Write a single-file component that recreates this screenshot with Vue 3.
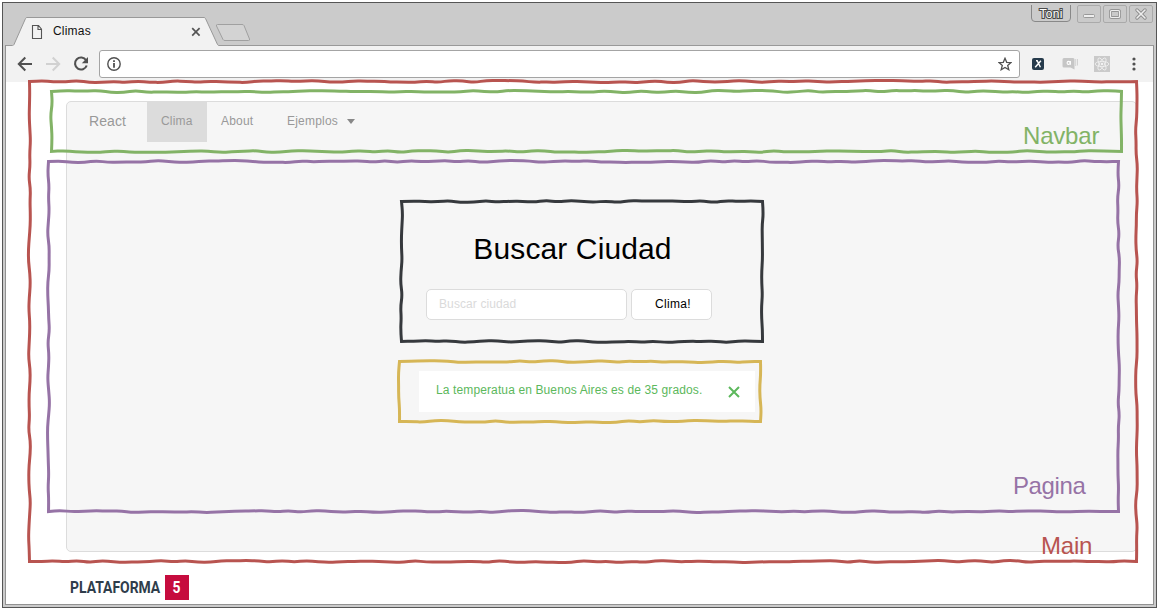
<script setup>
// Hand-sketched rectangles laid over the page to mark each component
const frames = [
  { name: 'Main', color: '#b85450', x: 29.5, y: 81.5, w: 1107, h: 480, seed: 1 },
  { name: 'Navbar', color: '#82b366', x: 51.5, y: 91.5, w: 1070, h: 60, seed: 2 },
  { name: 'Pagina', color: '#9673a6', x: 48.5, y: 161.5, w: 1070, h: 350, seed: 3 },
  { name: 'Buscador', color: '#36393d', x: 401.5, y: 201.5, w: 361, h: 140, seed: 4 },
  { name: 'Alerta', color: '#d6b656', x: 399.5, y: 361.5, w: 361, h: 60, seed: 5 },
]

function sketch(f) {
  let s = f.seed * 7919
  const rnd = () => {
    s = (s * 16807) % 2147483647
    return s / 2147483647 - 0.5
  }
  const side = (x1, y1, x2, y2) => {
    const len = Math.hypot(x2 - x1, y2 - y1)
    const n = Math.max(2, Math.round(len / 12))
    const pts = []
    for (let i = 0; i <= n; i++) {
      const t = i / n
      const d = i === 0 || i === n ? 0 : rnd() * 2.2
      pts.push([x1 + (x2 - x1) * t + (y1 === y2 ? 0 : d), y1 + (y2 - y1) * t + (y1 === y2 ? d : 0)])
    }
    let out = ''
    for (let i = 1; i < pts.length - 1; i++) {
      const mx = (pts[i][0] + pts[i + 1][0]) / 2
      const my = (pts[i][1] + pts[i + 1][1]) / 2
      out += `Q${pts[i][0].toFixed(2)} ${pts[i][1].toFixed(2)} ${mx.toFixed(2)} ${my.toFixed(2)}`
    }
    return out + `L${x2} ${y2}`
  }
  const r = f.x + f.w
  const b = f.y + f.h
  return `M${f.x} ${f.y}` + side(f.x, f.y, r, f.y) + side(r, f.y, r, b) + side(r, b, f.x, b) + side(f.x, b, f.x, f.y) + 'Z'
}
</script>

<template>
  <div class="screen">
    <div class="window">
      <header class="titlebar">
        <svg class="tabshape" width="1148" height="43" viewBox="6 3 1148 43">
          <path d="M6 46V45.500H12.500Q13.500 45.500 14 44.500L25.500 18.500Q26 17.500 27 17.500H204Q205 17.500 205.500 18.500L217.500 44.500Q218 45.500 219 45.500H1154V46Z" fill="#f2f2f2" />
          <path d="M6 45.500H12.500Q13.500 45.500 14 44.500L25.500 18.500Q26 17.500 27 17.500H204Q205 17.500 205.500 18.500L217.500 44.500Q218 45.500 219 45.500H1154" fill="none" stroke="#999" />
          <path d="M217.500 24.500H242Q243.500 24.500 244 25.500L249.500 39Q250 40.500 248.500 40.500H225Q223.500 40.500 223 39.500L216.500 26Q216 24.500 217.500 24.500Z" fill="#d3d3d3" stroke="#a0a0a0" />
        </svg>
        <div class="tab">
          <svg width="12" height="14" viewBox="0 0 12 14"><path d="M1.500 .5H7.500L10.500 4.200V13.500H1.500ZM7 .5V4.500H10.500" fill="none" stroke="#555" stroke-width="1.100" /></svg>
          <span>Climas</span>
          <svg class="tabclose" width="10" height="10" viewBox="0 0 10 10"><path d="M1.200 1.200L8.600 8.600M8.600 1.200L1.200 8.600" stroke="#555" stroke-width="1.700" /></svg>
        </div>
        <div class="controls">
          <svg class="user" width="40" height="18" viewBox="0 0 40 18">
            <path d="M.5 0V13Q.5 16.500 4 16.500H36Q39.500 16.500 39.500 13V0" fill="#cbcbcb" stroke="#888" />
            <text x="8.500" y="13" textLength="23" font-size="12" font-family="Liberation Sans, sans-serif" fill="#fff" stroke="#4b4b4b" stroke-width="2.200" paint-order="stroke">Toni</text>
          </svg>
          <svg width="24" height="18" viewBox="0 0 24 18"><rect x=".5" y=".5" width="23" height="17" rx="1.500" fill="#cacaca" stroke="#aaa" /><rect x="6.500" y="9.500" width="11" height="3" rx="1" fill="#eee" stroke="#999" /></svg>
          <svg width="24" height="18" viewBox="0 0 24 18"><rect x=".5" y=".5" width="23" height="17" rx="1.500" fill="#cacaca" stroke="#aaa" /><rect x="7.500" y="5.500" width="9" height="7" rx="1" fill="none" stroke="#959595" stroke-width="3" /><rect x="7.500" y="5.500" width="9" height="7" rx="1" fill="none" stroke="#eee" stroke-width="1.200" /></svg>
          <svg width="24" height="18" viewBox="0 0 24 18"><rect x=".5" y=".5" width="23" height="17" rx="1.500" fill="#cacaca" stroke="#aaa" /><path d="M8 5L16 13M16 5L8 13" stroke="#8d8d8d" stroke-width="3.400" stroke-linecap="round" /><path d="M8 5L16 13M16 5L8 13" stroke="#eee" stroke-width="1.600" stroke-linecap="round" /></svg>
        </div>
      </header>

      <div class="body">
        <div class="toolbar">
          <svg class="nav-icon" width="16" height="16" viewBox="0 0 16 16"><path d="M15 8H2M8.300 1.500L1.800 8L8.300 14.500" fill="none" stroke="#505050" stroke-width="2" /></svg>
          <svg class="nav-icon fwd" width="16" height="16" viewBox="0 0 16 16"><path d="M1 8H14M7.700 1.500L14.200 8L7.700 14.500" fill="none" stroke="#d1d1d1" stroke-width="2" /></svg>
          <svg class="nav-icon reload" width="16" height="16" viewBox="0 0 16 16"><path d="M13.100 4.300A6 6 0 1 0 13.700 9.500" fill="none" stroke="#505050" stroke-width="2.100" /><path d="M15 1V7.200H8.800Z" fill="#505050" /></svg>
          <div class="address">
            <svg width="14" height="14" viewBox="0 0 14 14"><circle cx="7" cy="7" r="6.200" fill="none" stroke="#505050" stroke-width="1.400" /><path d="M6.100 6H7.900V10.800H6.100ZM6.100 3.200H7.900V4.900H6.100Z" fill="#505050" /></svg>
            <svg width="14" height="14" viewBox="0 0 14 14"><path d="M7 1.300L8.700 5.300L13 5.600L9.700 8.400L10.800 12.700L7 10.400L3.200 12.700L4.300 8.400L1 5.600L5.300 5.300Z" fill="none" stroke="#505050" stroke-width="1.300" /></svg>
          </div>
          <svg class="ext-x" width="12" height="12" viewBox="0 0 12 12"><rect width="12" height="12" rx="2" fill="#263b4c" /><path d="M4 2.800H5.200L8.400 9.300M8.900 2.800L3.200 9.300" fill="none" stroke="#fff" stroke-width="1.400" /></svg>
          <svg class="ext-a" width="17" height="13" viewBox="0 0 17 13"><path d="M2 1H11Q12.500 1 12.500 2.500V12.500L8.500 10.500H2Q.5 10.500 .5 9V2.500Q.5 1 2 1Z" fill="#c6c6c6" /><path d="M13.700 2V9M15.500 2V8.500" stroke="#d2d2d2" /><circle cx="6.600" cy="5.900" r="1.500" fill="none" stroke="#fff" stroke-width="1.100" /><path d="M8.400 4V7.800" stroke="#fff" /></svg>
          <svg class="ext-react" width="16" height="16" viewBox="0 0 16 16"><rect width="16" height="16" fill="#cacaca" /><g fill="none" stroke="#f2f2f2" stroke-width=".8"><ellipse cx="8" cy="8" rx="6.800" ry="2.600" /><ellipse cx="8" cy="8" rx="6.800" ry="2.600" transform="rotate(60 8 8)" /><ellipse cx="8" cy="8" rx="6.800" ry="2.600" transform="rotate(120 8 8)" /></g><circle cx="8" cy="8" r="1.300" fill="#f2f2f2" /></svg>
          <svg class="menu" width="4" height="14" viewBox="0 0 4 14"><circle cx="2" cy="2" r="1.600" fill="#505050" /><circle cx="2" cy="7" r="1.600" fill="#505050" /><circle cx="2" cy="12" r="1.600" fill="#505050" /></svg>
        </div>

        <div class="page">
          <main class="panel">
            <nav class="navbar">
              <span class="brand">React</span>
              <span class="link active">Clima</span>
              <span class="link about">About</span>
              <span class="link drop">Ejemplos <i class="caret"></i></span>
            </nav>
            <section class="search">
              <h1>Buscar Ciudad</h1>
              <div class="form">
                <div class="input">Buscar ciudad</div>
                <div class="button">Clima!</div>
              </div>
            </section>
            <div class="alert">
              <span>La temperatua en Buenos Aires es de 35 grados.</span>
              <svg width="12" height="12" viewBox="0 0 12 12"><path d="M1 1L11 11M11 1L1 11" stroke="#5cb85c" stroke-width="2" /></svg>
            </div>
          </main>
          <footer>
            <span class="word">PLATAFORMA</span>
            <span class="five"><span>5</span></span>
          </footer>
        </div>
      </div>
    </div>

    <svg class="overlay" width="1158" height="609" viewBox="0 0 1158 609">
      <path v-for="f in frames" :key="f.name" :d="sketch(f)" fill="none" :stroke="f.color" stroke-width="3" />
    </svg>
    <span class="label label-navbar">Navbar</span>
    <span class="label label-pagina">Pagina</span>
    <span class="label label-main">Main</span>
  </div>
</template>

<style>
body { margin: 0; background: #fff; }
</style>

<style scoped>
* { box-sizing: border-box; }
svg { display: block; flex: none; }
.screen {
  position: relative;
  width: 1158px;
  height: 609px;
  padding: 2px 1px 1px 2px;
  overflow: hidden;
  font-family: "Liberation Sans", sans-serif;
  font-size: 12px;
}
.window {
  display: flex;
  flex-direction: column;
  height: 606px;
  border: 1px solid #555;
  background: #cbcbcb;
  padding: 0 2px 2px 2px;
}
.titlebar {
  position: relative;
  display: flex;
  justify-content: space-between;
  height: 42px;
  flex: none;
}
.tabshape { position: absolute; left: 1px; top: 0; }
.tab {
  position: relative;
  display: flex;
  align-items: center;
  width: 196px;
  height: 28px;
  margin-top: 15px;
  padding-left: 26px;
  color: #111;
}
.tab span { margin: -3px 0 0 10px; letter-spacing: 0.2px; flex: 1; }
.controls { display: flex; gap: 2px; margin: 2px 1px 0 0; position: relative; }
.controls .user { margin-right: 4px; }
.body {
  flex: 1;
  display: flex;
  flex-direction: column;
  border: 1px solid #929292;
  border-top: 0;
  background: #fff;
}
.toolbar {
  display: flex;
  align-items: center;
  height: 37px;
  background: #f2f2f2;
  flex: none;
  padding: 0 0 0 11px;
}
.fwd { margin-left: 12px; }
.reload { margin-left: 12px; }
.address {
  display: flex;
  align-items: center;
  justify-content: space-between;
  width: 921px;
  height: 28px;
  margin-left: 10px;
  padding: 0 7px 0 7px;
  border: 1px solid #a4a4a4;
  border-radius: 3px;
  background: #fff;
}
.ext-x { margin-left: 12px; }
.ext-a { margin-left: 18px; }
.ext-react { margin-left: 15px; }
.menu { margin-left: 22px; }
.page { flex: 1; padding: 19px 16px 0 60px; }
.panel {
  height: 451px;
  border: 1px solid #dcdcdc;
  border-radius: 5px;
  background: #f6f6f6;
}
.navbar { display: flex; height: 40px; color: #999; line-height: 38px; letter-spacing: 0.2px; }
.brand { width: 79.5px; padding-left: 22px; font-size: 14px; line-height: 39px; letter-spacing: 0.1px; }
.link { padding-left: 14.5px; }
.link.active { width: 60px; height: 39.5px; background: #dcdcdc; }
.link.about { width: 66px; }
.link.drop { display: flex; align-items: center; height: 38px; }
.caret {
  margin-left: 9px;
  border: 4.5px solid transparent;
  border-top: 5px solid #888;
  border-bottom: 0;
}
.search { width: 286px; margin: 87px 0 0 359px; }
h1 { margin: 0; padding-left: 7px; text-align: center; font-size: 30px; line-height: 40px; font-weight: 400; color: #000; white-space: nowrap; letter-spacing: 0.12px; }
.form { display: flex; gap: 4px; margin-top: 20px; }
.input, .button {
  height: 31px;
  line-height: 28px;
  border: 1px solid #dcdcdc;
  border-radius: 5px;
  background: #fff;
  letter-spacing: 0.1px;
}
.input { width: 201px; padding-left: 12px; color: #dadada; }
.button { width: 81px; padding-left: 3px; text-align: center; color: #000; letter-spacing: 0.3px; }
.alert {
  display: flex;
  justify-content: space-between;
  width: 336px;
  height: 41px;
  margin: 51px 0 0 352px;
  padding: 0 15px 0 17px;
  background: #fff;
  color: #5cb85c;
  line-height: 38px;
  letter-spacing: 0.12px;
}
.alert svg { margin-top: 15px; }
footer { display: flex; margin: 23px 0 0 4px; height: 25px; font-family: Roboto, sans-serif; font-weight: 700; color: #2f3d4b; }
.word { width: 95px; font-size: 16px; line-height: 26px; transform: scaleX(0.87); transform-origin: left; }
.five { display: flex; justify-content: center; width: 24px; height: 25px; background: #c60c3e; color: #fff; font-size: 16px; line-height: 26px; }
.five span { transform: scaleX(0.87); }
.overlay { position: absolute; left: 0; top: 0; }
.label { position: absolute; font-size: 24px; line-height: 28px; letter-spacing: -0.2px; }
.label-navbar { left: 1023px; top: 122px; color: #82b366; }
.label-pagina { left: 1013px; top: 472px; color: #9673a6; letter-spacing: -0.4px; }
.label-main { left: 1041px; top: 532px; color: #b85450; }
</style>
